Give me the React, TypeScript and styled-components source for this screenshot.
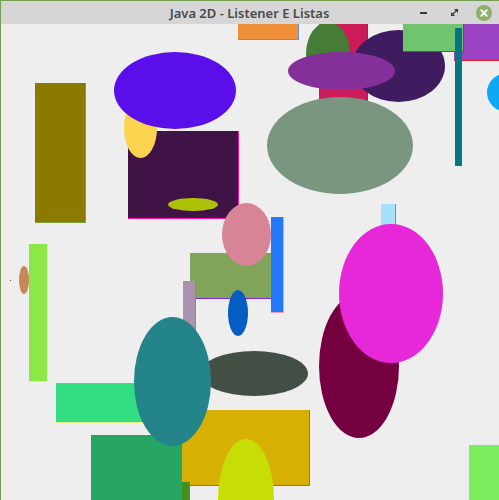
import { createGlobalStyle, styled } from 'styled-components';

const GlobalStyle = createGlobalStyle`
  html, body {
    margin: 0;
    padding: 0;
    background: #eeeeee;
  }
`;

type ShapeKind = 'rect' | 'oval';

interface ShapeData {
  kind: ShapeKind;
  x: number;
  y: number;
  w: number;
  h: number;
  fill: string;
  edge?: string;
}

// page coordinates, in paint order (later ones lie on top)
const shapes: ShapeData[] = [
  { kind: 'rect', x: 319, y: 10, w: 48, h: 90, fill: '#cc1b5a', edge: '#4a4a6a' },
  { kind: 'oval', x: 306, y: 22, w: 44, h: 64, fill: '#467c35' },
  { kind: 'oval', x: 352, y: 30, w: 93, h: 72, fill: '#3f1b60' },
  { kind: 'oval', x: 288, y: 52, w: 107, h: 38, fill: '#85309a' },
  { kind: 'oval', x: 267, y: 97, w: 146, h: 97, fill: '#7b9680' },
  { kind: 'rect', x: 238, y: 10, w: 60, h: 29, fill: '#ef9039', edge: '#6b8de0' },
  { kind: 'rect', x: 454, y: 10, w: 50, h: 50, fill: '#9b43c3', edge: '#e02030' },
  { kind: 'rect', x: 403, y: 10, w: 60, h: 41, fill: '#70c470', edge: '#4a5a70' },
  { kind: 'rect', x: 455, y: 28, w: 6, h: 137, fill: '#067680', edge: '#e02020' },
  { kind: 'oval', x: 487, y: 73, w: 40, h: 39, fill: '#0ea9f5' },
  { kind: 'rect', x: 128, y: 131, w: 110, h: 87, fill: '#3f1346', edge: '#ff10a0' },
  { kind: 'oval', x: 124, y: 98, w: 33, h: 60, fill: '#fbd44f' },
  { kind: 'oval', x: 114, y: 52, w: 122, h: 77, fill: '#5a0fea' },
  { kind: 'oval', x: 168, y: 198, w: 50, h: 13, fill: '#adc108' },
  { kind: 'rect', x: 35, y: 83, w: 50, h: 139, fill: '#8c7a00', edge: '#7aa040' },
  { kind: 'rect', x: 190, y: 253, w: 85, h: 45, fill: '#7fa45a', edge: '#7a2ae0' },
  { kind: 'oval', x: 222, y: 203, w: 49, h: 63, fill: '#d88497' },
  { kind: 'rect', x: 271, y: 217, w: 12, h: 95, fill: '#2479fb', edge: '#e8a0b8' },
  { kind: 'rect', x: 183, y: 281, w: 12, h: 60, fill: '#aa92b1', edge: '#3f9be8' },
  { kind: 'oval', x: 228, y: 290, w: 20, h: 46, fill: '#055dc1' },
  { kind: 'rect', x: 29, y: 244, w: 18, h: 137, fill: '#8ce747', edge: '#f0f060' },
  { kind: 'oval', x: 19, y: 266, w: 10, h: 28, fill: '#c88755' },
  { kind: 'oval', x: 200, y: 351, w: 108, h: 45, fill: '#434f44' },
  { kind: 'rect', x: 56, y: 383, w: 90, h: 39, fill: '#33de82', edge: '#e0f080' },
  { kind: 'rect', x: 182, y: 410, w: 127, h: 75, fill: '#d6b104', edge: '#5e6ef0' },
  { kind: 'rect', x: 91, y: 435, w: 91, h: 70, fill: '#27a562' },
  { kind: 'oval', x: 134, y: 317, w: 77, h: 129, fill: '#238589' },
  { kind: 'rect', x: 182, y: 482, w: 7, h: 30, fill: '#44901f', edge: '#20b030' },
  { kind: 'oval', x: 218, y: 439, w: 56, h: 120, fill: '#c7de06' },
  { kind: 'rect', x: 381, y: 204, w: 14, h: 40, fill: '#a5e0f8', edge: '#70a060' },
  { kind: 'oval', x: 319, y: 294, w: 80, h: 144, fill: '#740040' },
  { kind: 'oval', x: 339, y: 224, w: 104, h: 139, fill: '#e628d9' },
  { kind: 'rect', x: 469, y: 445, w: 40, h: 60, fill: '#7ded60' },
  { kind: 'rect', x: 10, y: 280, w: 1, h: 1, fill: '#555555' },
];

const CANVAS_X = 1;
const CANVAS_Y = 24;

export default function App() {
  return (
    <>
      <GlobalStyle />
      <Frame>
        <TitleBar>
          <Spacer />
          <Title>Java 2D - Listener E Listas</Title>
          <Controls>
            <MinimizeButton />
            <MaximizeButton>
              <svg width="7" height="7" viewBox="0 0 7 7">
                <path d="M3 0H7V4Z" fill="#3a3a3a" />
                <path d="M0 3V7H4Z" fill="#3a3a3a" />
                <path d="M1.5 5.5L5.5 1.5" stroke="#3a3a3a" strokeWidth="1.2" />
              </svg>
            </MaximizeButton>
            <CloseButton>
              <svg width="8" height="8" viewBox="0 0 8 8">
                <path d="M1.2 1.2L6.8 6.8M6.8 1.2L1.2 6.8" stroke="#ffffff" strokeWidth="1.8" strokeLinecap="round" />
              </svg>
            </CloseButton>
          </Controls>
        </TitleBar>
        <Canvas>
          {shapes.map((s, i) => (
            <Shape
              key={i}
              $kind={s.kind}
              $fill={s.fill}
              $edge={s.edge}
              style={{ left: s.x - CANVAS_X, top: s.y - CANVAS_Y, width: s.w, height: s.h }}
            />
          ))}
        </Canvas>
      </Frame>
    </>
  );
}

const Frame = styled.div`
  width: 499px;
  height: 500px;
  box-sizing: border-box;
  border-top: 1px solid #76a050;
  border-left: 1px solid #76a050;
  display: flex;
  flex-direction: column;
  overflow: hidden;
  background: #eeeeee;
`;

const TitleBar = styled.div`
  height: 23px;
  flex: 0 0 23px;
  background: #d6d6d6;
  display: flex;
  align-items: center;
  font-family: 'Noto Sans', 'DejaVu Sans', sans-serif;
`;

const Spacer = styled.div`
  flex: 1;
`;

const Title = styled.div`
  font-size: 13px;
  font-weight: 600;
  color: #4a4a4a;
  white-space: nowrap;
  padding-top: 1px;
  margin-left: 6px;
`;

const Controls = styled.div`
  flex: 1;
  display: flex;
  justify-content: flex-end;
  align-items: center;
  gap: 15px;
  padding-right: 7px;
`;

const MinimizeButton = styled.div`
  width: 7px;
  height: 2px;
  background: #3a3a3a;
  margin-top: 1px;
`;

const MaximizeButton = styled.div`
  display: flex;
  width: 7px;
  height: 7px;
  margin-left: 9px;
`;

const CloseButton = styled.div`
  width: 16px;
  height: 16px;
  border-radius: 50%;
  background: #8faf6b;
  display: flex;
  align-items: center;
  justify-content: center;
  margin-left: 3px;
`;

const Canvas = styled.div`
  position: relative;
  flex: 1;
  overflow: hidden;
  background: #eeeeee;
`;

const Shape = styled.div<{ $kind: ShapeKind; $fill: string; $edge?: string }>`
  position: absolute;
  box-sizing: content-box;
  background: ${({ $fill }) => $fill};
  border-radius: ${({ $kind }) => ($kind === 'oval' ? '50%' : '0')};
  ${({ $kind, $edge }) =>
    $kind === 'rect' && $edge
      ? `border-right: 1px solid ${$edge}; border-bottom: 1px solid ${$edge};`
      : ''}
`;
